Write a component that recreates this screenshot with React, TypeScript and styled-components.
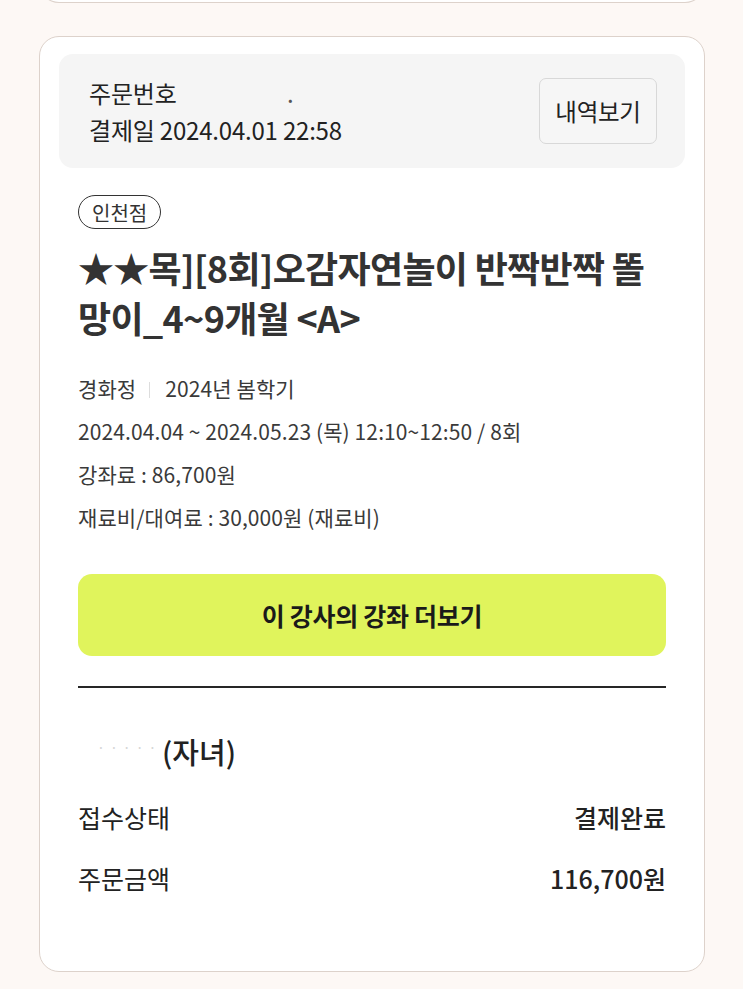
import styled, { createGlobalStyle } from "styled-components"

const GlobalStyle = createGlobalStyle`
    html, body {
        margin: 0;
        padding: 0;
        background: #fdf8f5;
    }
    body {
        font-family: "Noto Sans CJK KR", "Noto Sans", sans-serif;
        color: #222;
    }
`

const Page = styled.main`
    padding: 0 38px 0 39px;
`

// bottom edge of the previous order card, scrolled mostly out of view
const PrevCard = styled.div`
    height: 24px;
    margin-top: -22px;
    border: 1.5px solid #ddd2cb;
    border-top: none;
    border-radius: 0 0 20px 20px;
    background: #fff;
`

const Card = styled.section`
    margin-top: 33px;
    border: 1.5px solid #ddd2cb;
    border-radius: 20px;
    background: #fff;
    padding: 17px 19px 0;
    height: 936px;
    box-sizing: border-box;
`

const OrderBox = styled.div`
    display: flex;
    align-items: center;
    justify-content: space-between;
    height: 114px;
    box-sizing: border-box;
    padding: 0 28px 0 30px;
    border-radius: 14px;
    background: #f5f5f5;
`

const OrderText = styled.div`
    font-size: 24px;
    line-height: 37px;
    color: #222;
    letter-spacing: -0.2px;
`

const Masked = styled.span`
    display: inline-block;
    width: 117px;
    text-align: right;
    color: #555;
`

const HistoryButton = styled.button`
    width: 118px;
    height: 66px;
    border: 1.5px solid #d8d8d8;
    border-radius: 7px;
    background: #f6f6f6;
    font-family: inherit;
    font-size: 23.5px;
    letter-spacing: -0.3px;
    color: #222;
    padding: 0;
`

const Body = styled.div`
    padding: 27px 19px 0;
`

const Tag = styled.span`
    display: inline-flex;
    align-items: center;
    justify-content: center;
    height: 34px;
    box-sizing: border-box;
    padding: 0 13px;
    border: 1.5px solid #333;
    border-radius: 17px;
    font-size: 20px;
    color: #333;
`

const Title = styled.h2`
    margin: 13px 0 0;
    font-size: 36px;
    font-weight: 700;
    line-height: 50px;
    color: #333;
    letter-spacing: -0.7px;
`

const InfoList = styled.div`
    margin-top: 25px;
`

const InfoLine = styled.div`
    font-size: 21px;
    line-height: 43px;
    color: #3a3a3a;
    letter-spacing: 0.1px;
`

const Sep = styled.span`
    display: inline-block;
    width: 1px;
    height: 16px;
    margin: 0 15px 0 13px;
    background: #ddd;
    vertical-align: -1px;
`

const MoreButton = styled.button`
    display: block;
    width: 100%;
    height: 82px;
    margin-top: 35px;
    border: none;
    border-radius: 14px;
    background: #e0f45c;
    font-family: inherit;
    font-size: 25px;
    font-weight: 700;
    color: #1a1a1a;
    letter-spacing: -0.3px;
`

const Divider = styled.hr`
    margin: 30px 0 0;
    border: none;
    height: 2px;
    background: #262626;
`

const Child = styled.div`
    margin-top: 40px;
    font-size: 29px;
    font-weight: 500;
    line-height: 38px;
    color: #222;
`

const Dots = styled.span`
    display: inline-block;
    width: 84px;
    text-align: right;
    color: #d6d6d6;
    font-size: 12px;
    letter-spacing: 6px;
    vertical-align: 12px;
`

const Row = styled.div`
    display: flex;
    justify-content: space-between;
    align-items: center;
    font-size: 25px;
    line-height: 61px;
    color: #222;
`

const Value = styled.span<{ $strong?: boolean }>`
    font-weight: ${({ $strong }) => ($strong ? 500 : 400)};
`

const Rows = styled.div`
    margin-top: 17px;
`

export default function App() {
    return (
        <>
            <GlobalStyle />
            <Page>
                <PrevCard />
                <Card>
                    <OrderBox>
                        <OrderText>
                            <div>
                                주문번호<Masked>.</Masked>
                            </div>
                            <div>결제일 2024.04.01 22:58</div>
                        </OrderText>
                        <HistoryButton>내역보기</HistoryButton>
                    </OrderBox>
                    <Body>
                        <Tag>인천점</Tag>
                        <Title>★★목][8회]오감자연놀이 반짝반짝 똘망이_4~9개월 &lt;A&gt;</Title>
                        <InfoList>
                            <InfoLine>
                                경화정<Sep />2024년 봄학기
                            </InfoLine>
                            <InfoLine>2024.04.04 ~ 2024.05.23 (목) 12:10~12:50 / 8회</InfoLine>
                            <InfoLine>강좌료 : 86,700원</InfoLine>
                            <InfoLine>재료비/대여료 : 30,000원 (재료비)</InfoLine>
                        </InfoList>
                        <MoreButton>이 강사의 강좌 더보기</MoreButton>
                        <Divider />
                        <Child>
                            <Dots>·····</Dots>(자녀)
                        </Child>
                        <Rows>
                            <Row>
                                <span>접수상태</span>
                                <Value $strong>결제완료</Value>
                            </Row>
                            <Row>
                                <span>주문금액</span>
                                <Value $strong>116,700원</Value>
                            </Row>
                        </Rows>
                    </Body>
                </Card>
            </Page>
        </>
    )
}
